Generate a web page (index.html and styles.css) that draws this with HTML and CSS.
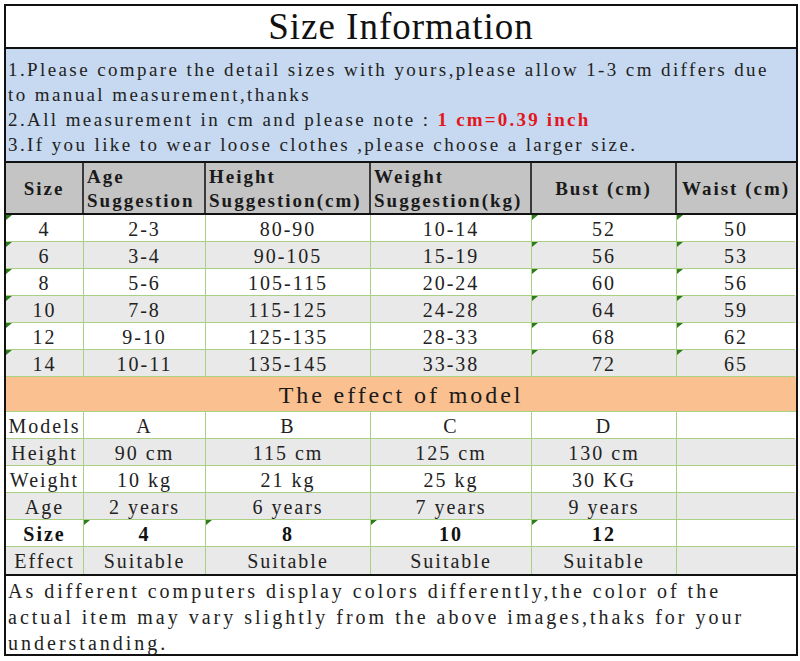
FILE: index.html
```html
<!DOCTYPE html>
<html>
<head>
<meta charset="utf-8">
<link rel="stylesheet" href="styles.css">
</head>
<body>
<div class="sheet">
  <div class="title">Size Information</div>
  <div class="notes">
    <div class="ln">1.Please compare the detail sizes with yours,please allow 1-3 cm differs due</div>
    <div class="ln">to manual measurement,thanks</div>
    <div class="ln">2.All measurement in cm and please note : <span class="red">1 cm=0.39 inch</span></div>
    <div class="ln">3.If you like to wear loose clothes ,please choose a larger size.</div>
  </div>
  <div class="row head">
    <div class="hd">Size</div>
    <div class="hd left">Age<br>Suggestion</div>
    <div class="hd left">Height<br>Suggestion(cm)</div>
    <div class="hd left">Weight<br>Suggestion(kg)</div>
    <div class="hd">Bust (cm)</div>
    <div class="hd">Waist (cm)</div>
  </div>
  <div class="row"><div class="c t">4</div><div class="c">2-3</div><div class="c">80-90</div><div class="c">10-14</div><div class="c t">52</div><div class="c t">50</div></div>
  <div class="row g"><div class="c t">6</div><div class="c">3-4</div><div class="c">90-105</div><div class="c">15-19</div><div class="c t">56</div><div class="c t">53</div></div>
  <div class="row"><div class="c t">8</div><div class="c">5-6</div><div class="c">105-115</div><div class="c">20-24</div><div class="c t">60</div><div class="c t">56</div></div>
  <div class="row g"><div class="c t">10</div><div class="c">7-8</div><div class="c">115-125</div><div class="c">24-28</div><div class="c t">64</div><div class="c t">59</div></div>
  <div class="row"><div class="c t">12</div><div class="c">9-10</div><div class="c">125-135</div><div class="c">28-33</div><div class="c t">68</div><div class="c t">62</div></div>
  <div class="row g"><div class="c t">14</div><div class="c">10-11</div><div class="c">135-145</div><div class="c">33-38</div><div class="c t">72</div><div class="c t">65</div></div>
  <div class="band">The effect of model</div>
  <div class="row"><div class="c">Models</div><div class="c">A</div><div class="c">B</div><div class="c">C</div><div class="c">D</div><div class="c"></div></div>
  <div class="row g"><div class="c">Height</div><div class="c">90 cm</div><div class="c">115 cm</div><div class="c">125 cm</div><div class="c">130 cm</div><div class="c"></div></div>
  <div class="row"><div class="c">Weight</div><div class="c">10 kg</div><div class="c">21 kg</div><div class="c">25 kg</div><div class="c">30 KG</div><div class="c"></div></div>
  <div class="row g"><div class="c">Age</div><div class="c">2 years</div><div class="c">6 years</div><div class="c">7 years</div><div class="c">9 years</div><div class="c"></div></div>
  <div class="row b"><div class="c">Size</div><div class="c t">4</div><div class="c t">8</div><div class="c t">10</div><div class="c t">12</div><div class="c"></div></div>
  <div class="row g last"><div class="c">Effect</div><div class="c">Suitable</div><div class="c">Suitable</div><div class="c">Suitable</div><div class="c">Suitable</div><div class="c"></div></div>
  <div class="foot">
    <div class="ln">As different computers display colors differently,the color of the</div>
    <div class="ln">actual item may vary slightly from the above images,thaks for your</div>
    <div class="ln">understanding.</div>
  </div>
</div>
</body>
</html>
```

FILE: styles.css
```css
body {
  margin: 0;
  background: #ffffff;
  font-family: "Liberation Serif", "Times New Roman", serif;
  color: #1c1c1c;
}

.sheet {
  margin: 4px 0 0 4px;
  width: 794px;
  box-sizing: border-box;
  border: 2px solid #111111;
}

.title {
  height: 43px;
  box-sizing: border-box;
  padding-top: 1px;
  border-bottom: 2px solid #111111;
  font-size: 37px;
  letter-spacing: 1px;
  line-height: 40px;
  text-align: center;
  color: #111111;
}

.notes {
  height: 114px;
  box-sizing: border-box;
  background: #c6d9f0;
  border-bottom: 2px solid #111111;
  padding: 8px 0 0 2px;
  font-size: 19px;
  letter-spacing: 2.4px;
  line-height: 25px;
  color: #222222;
}

.ln {
  white-space: pre;
}

.red {
  color: #e3161c;
  font-weight: bold;
  letter-spacing: 2.2px;
  line-height: 1;
}

.row {
  display: grid;
  grid-template-columns: 78px 122px 165px 161px 145px 118px;
  background: #ffffff;
}

.row.g {
  background: #e9e9e9;
}

.head {
  height: 52px;
  background: #c4c4c4;
  border-bottom: 2px solid #111111;
  box-sizing: border-box;
}

.hd {
  display: flex;
  align-items: center;
  justify-content: center;
  border-right: 2px solid #3a3a3a;
  font-weight: bold;
  font-size: 19px;
  letter-spacing: 2px;
  line-height: 24px;
  color: #1a1a1a;
  padding-top: 1px;
  white-space: nowrap;
}

.hd.left {
  justify-content: flex-start;
  padding-left: 3px;
}

.hd:last-child {
  border-right: none;
}

.c {
  position: relative;
  height: 27px;
  box-sizing: border-box;
  border-right: 1px solid #a9d083;
  border-bottom: 1px solid #a9d083;
  text-align: center;
  font-size: 20px;
  letter-spacing: 2px;
  line-height: 29px;
  white-space: nowrap;
  color: #222222;
}

.c:last-child {
  border-right: none;
}

.t::before {
  content: "";
  position: absolute;
  left: 0;
  top: 0;
  border-top: 5px solid #2d7a1f;
  border-right: 6px solid transparent;
}

.row.b .c {
  font-weight: bold;
  color: #111111;
}

.row.last .c {
  border-bottom: none;
}

.band {
  height: 35px;
  box-sizing: border-box;
  background: #fac08f;
  border-bottom: 1px solid #a9d083;
  text-align: center;
  font-size: 24px;
  letter-spacing: 2.9px;
  line-height: 36px;
  color: #1a1a1a;
}

.foot {
  height: 80px;
  box-sizing: border-box;
  border-top: 2px solid #111111;
  padding: 2px 0 0 2px;
  font-size: 20px;
  letter-spacing: 3px;
  line-height: 26px;
  color: #222222;
}
```
